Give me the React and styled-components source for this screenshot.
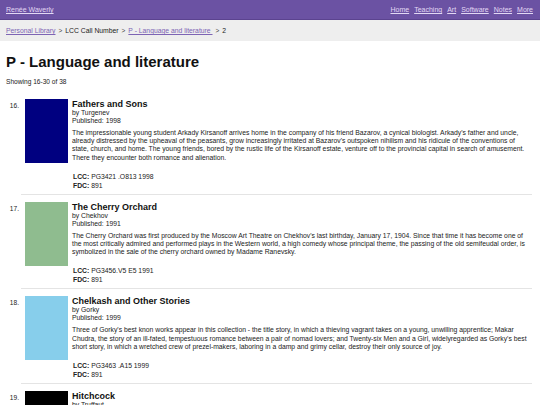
import React from 'react';
import styled, { createGlobalStyle } from 'styled-components';

const GlobalStyle = createGlobalStyle`
    body {
        margin: 0;
        background: #ffffff;
        font-family: "Liberation Sans", Arial, sans-serif;
        color: #222222;
    }
`;

const TopBar = styled.header`
    height: 19px;
    background: #6b52a3;
    display: flex;
    align-items: center;
    justify-content: space-between;
    padding: 0 7px 0 6px;
    border-bottom: 1px solid #5b438f;
    font-size: 7px;
`;

const TopLink = styled.a`
    color: #e2d8f4;
    text-decoration: underline;
`;

const Nav = styled.nav`
    display: flex;
    gap: 5px;
`;

const Crumbs = styled.div`
    height: 21px;
    background: #eeeeee;
    display: flex;
    align-items: center;
    gap: 3px;
    padding: 0 6px;
    font-size: 6.8px;
`;

const CrumbLink = styled.a`
    color: #7d64b4;
    text-decoration: underline;
`;

const CrumbText = styled.span`
    color: #222222;
`;

const Chevron = styled.span`
    color: #444444;
    font-size: 6.5px;
`;

const Main = styled.main`
    padding: 10px 8px 0 6px;
`;

const Heading = styled.h1`
    margin: 0;
    font-size: 15px;
    font-weight: bold;
    line-height: 22px;
    color: #111111;
`;

const Showing = styled.p`
    margin: 4px 0 6px;
    font-size: 6.6px;
    line-height: 9px;
`;

const Row = styled.div`
    display: flex;
    align-items: flex-start;
`;

const Number = styled.span`
    width: 13px;
    padding-right: 2px;
    padding-top: 9px;
    text-align: right;
    font-size: 6.6px;
    line-height: 9px;
`;

const Entry = styled.div`
    flex: 1;
    display: flex;
    align-items: flex-start;
    gap: 4px;
    padding: 7px 0 4px 4px;
    border-bottom: 1px solid #e4e4e4;
`;

const Cover = styled.div`
    width: 43px;
    height: 64px;
    flex-shrink: 0;
    background: ${(p) => p.color};
`;

const Body = styled.div`
    flex: 1;
    font-size: 6.8px;
    line-height: 8.2px;
`;

const Title = styled.h2`
    margin: 0;
    font-size: 9px;
    line-height: 10px;
    font-weight: bold;
    color: #111111;
`;

const Meta = styled.div`
    line-height: 8px;
`;

const Description = styled.p`
    margin: 4px 0 0;
`;

const Details = styled.div`
    margin-top: 10px;
    padding-left: 1px;
    line-height: 9px;
`;

const Label = styled.b`
    font-weight: bold;
`;

const books = [
    {
        n: 16,
        title: 'Fathers and Sons',
        author: 'Turgenev',
        year: 1998,
        color: '#000080',
        text: "The impressionable young student Arkady Kirsanoff arrives home in the company of his friend Bazarov, a cynical biologist. Arkady's father and uncle, already distressed by the upheaval of the peasants, grow increasingly irritated at Bazarov's outspoken nihilism and his ridicule of the conventions of state, church, and home. The young friends, bored by the rustic life of the Kirsanoff estate, venture off to the provincial capital in search of amusement. There they encounter both romance and alienation.",
        lcc: 'PG3421 .O813 1998',
        fdc: '891',
    },
    {
        n: 17,
        title: 'The Cherry Orchard',
        author: 'Chekhov',
        year: 1991,
        color: '#8fbc8f',
        text: "The Cherry Orchard was first produced by the Moscow Art Theatre on Chekhov's last birthday, January 17, 1904. Since that time it has become one of the most critically admired and performed plays in the Western world, a high comedy whose principal theme, the passing of the old semifeudal order, is symbolized in the sale of the cherry orchard owned by Madame Ranevsky.",
        lcc: 'PG3456.V5 E5 1991',
        fdc: '891',
    },
    {
        n: 18,
        title: 'Chelkash and Other Stories',
        author: 'Gorky',
        year: 1999,
        color: '#87ceeb',
        text: "Three of Gorky's best knon works appear in this collection - the title story, in which a thieving vagrant takes on a young, unwilling apprentice; Makar Chudra, the story of an ill-fated, tempestuous romance between a pair of nomad lovers; and Twenty-six Men and a Girl, widelyregarded as Gorky's best short story, in which a wretched crew of prezel-makers, laboring in a damp and grimy cellar, destroy their only source of joy.",
        lcc: 'PG3463 .A15 1999',
        fdc: '891',
    },
    {
        n: 19,
        title: 'Hitchcock',
        author: 'Truffaut',
        year: 1985,
        color: '#000000',
        text: 'A book-length interview in which François Truffaut questions Alfred Hitchcock about each of his films.',
        lcc: 'PN1998.A3 H5 1985',
        fdc: '791',
    },
];

export default function App() {
    return (
        <>
            <GlobalStyle />
            <TopBar>
                <TopLink href="#">Renée Waverly</TopLink>
                <Nav>
                    <TopLink href="#">Home</TopLink>
                    <TopLink href="#">Teaching</TopLink>
                    <TopLink href="#">Art</TopLink>
                    <TopLink href="#">Software</TopLink>
                    <TopLink href="#">Notes</TopLink>
                    <TopLink href="#">More</TopLink>
                </Nav>
            </TopBar>
            <Crumbs>
                <CrumbLink href="#">Personal Library</CrumbLink>
                <Chevron>&gt;</Chevron>
                <CrumbText>LCC Call Number</CrumbText>
                <Chevron>&gt;</Chevron>
                <CrumbLink href="#">P - Language and literature&nbsp;</CrumbLink>
                <Chevron>&gt;</Chevron>
                <CrumbText>2</CrumbText>
            </Crumbs>
            <Main>
                <Heading>P - Language and literature</Heading>
                <Showing>Showing 16-30 of 38</Showing>
                {books.map((b) => (
                    <Row key={b.n}>
                        <Number>{b.n}.</Number>
                        <Entry>
                            <Cover color={b.color} />
                            <Body>
                                <Title>{b.title}</Title>
                                <Meta>by {b.author}</Meta>
                                <Meta>Published: {b.year}</Meta>
                                <Description>{b.text}</Description>
                                <Details>
                                    <div>
                                        <Label>LCC:</Label> {b.lcc}
                                    </div>
                                    <div>
                                        <Label>FDC:</Label> {b.fdc}
                                    </div>
                                </Details>
                            </Body>
                        </Entry>
                    </Row>
                ))}
            </Main>
        </>
    );
}
